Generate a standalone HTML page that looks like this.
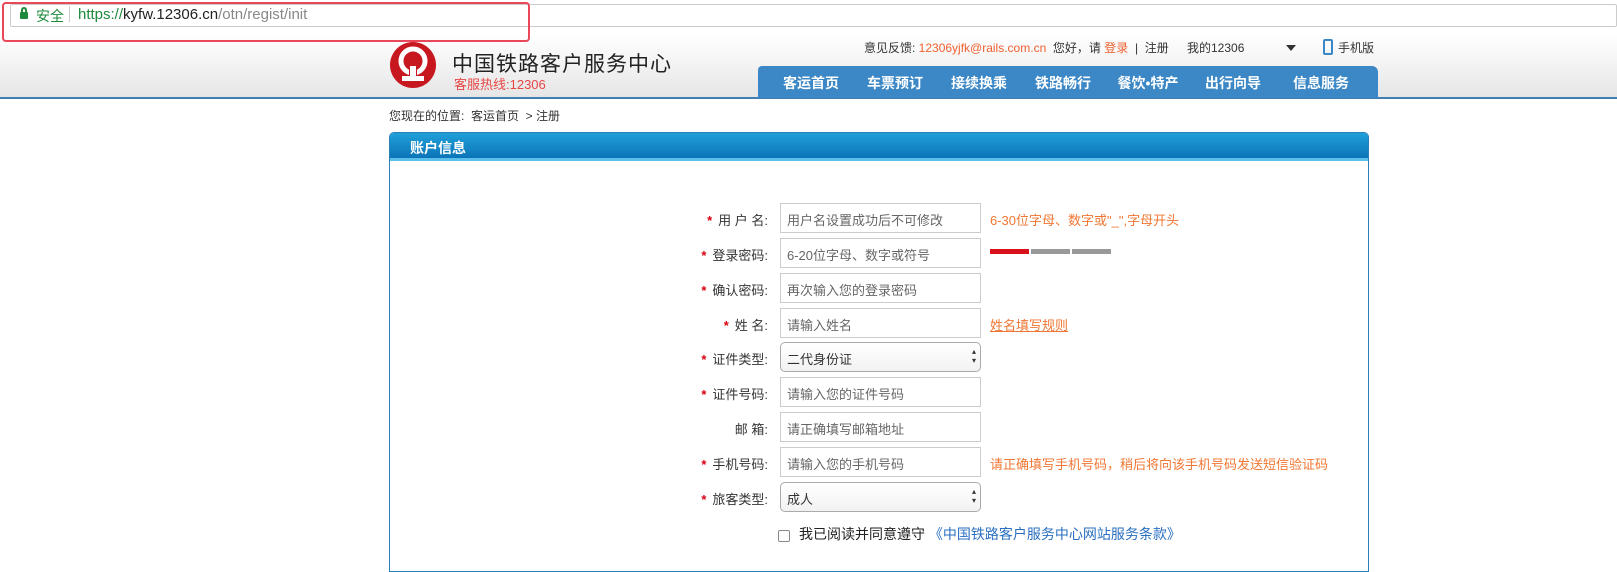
<!DOCTYPE html>
<html><head><meta charset="utf-8"><style>
*{margin:0;padding:0;box-sizing:border-box}
body{width:1617px;height:555px;overflow:hidden;background:#fff;font-family:"Liberation Sans","Noto Sans CJK SC",sans-serif;font-size:13px;color:#333;position:relative}
.abs{position:absolute;white-space:nowrap}
.hdr{position:absolute;left:0;top:34px;width:1617px;height:65px;background:linear-gradient(#fff,#e6e6e6);border-bottom:2px solid #3f7fb4}
.nav{position:absolute;left:758px;top:66px;width:620px;height:32px;background:#3c88c6;border-radius:4px 6px 0 0}
.nav span{position:absolute;top:7px;color:#fff;font-weight:bold;font-size:14px;transform:translateX(-50%)}
.panel{position:absolute;left:389px;top:132px;width:980px;height:440px;border:1px solid #2a7fb6;border-radius:5px 5px 0 0}
.ph{height:28px;background:linear-gradient(#20a0d8,#0b74b8);border-bottom:3px solid #5cc0ea;color:#fff;font-weight:bold;font-size:14px;padding:5px 0 0 20px;border-radius:4px 4px 0 0}
.inp{position:absolute;left:780px;width:201px;height:30px;border:1px solid #ccc;color:#666;font-size:13px;padding:6px 0 0 6px}
.sel{border-radius:5px;border-color:#aaa;background:linear-gradient(#fff,#f2f2f2);color:#333}
.sel:after{content:"▴\A▾";white-space:pre;position:absolute;right:4px;top:4px;font-size:8px;line-height:9px;color:#333}
.lb{position:absolute;right:849px;font-size:13px;color:#333}
.st{color:#d8000f;font-weight:bold;margin-right:6px}
.hint{position:absolute;left:990px;color:#f07733;font-size:13px}
</style></head><body>
<div class="abs" style="left:10px;top:4px;width:1607px;height:23px;border:1px solid #ccc;border-radius:2px"></div>
<div class="abs" style="left:20px;top:12px;width:8px;height:7px;background:#1d8b3b;border-radius:1px"></div>
<div class="abs" style="left:21px;top:7px;width:6px;height:7px;border:2px solid #1d8b3b;border-radius:3px 3px 0 0;border-bottom:none"></div>
<div class="abs" style="left:36px;top:6px;color:#1d8b3b;font-size:14px">安全</div>
<div class="abs" style="left:69px;top:6px;width:1px;height:16px;background:#ccc"></div>
<div class="abs" style="left:78px;top:6px;font-size:15px;color:#1d8b3b">https://<span style="color:#222">kyfw.12306.cn</span><span style="color:#888">/otn/regist/init</span></div>

<div class="hdr"></div>
<div class="abs" style="left:2px;top:2px;width:528px;height:40px;border:2px solid #e8485a;border-radius:4px;z-index:5"></div>
<svg class="abs" style="left:389px;top:41px" width="48" height="48" viewBox="0 0 48 48"><circle cx="24" cy="24" r="23" fill="#c8181f"/><circle cx="24" cy="20" r="12" fill="none" stroke="#fff" stroke-width="5"/><rect x="20" y="28" width="8" height="8" fill="#c8181f"/><rect x="21" y="25" width="6" height="11" fill="#fff"/><rect x="13" y="35" width="22" height="5" fill="#fff"/></svg>
<div class="abs" style="left:452px;top:48px;font-size:21px;color:#222;letter-spacing:1px">中国铁路客户服务中心</div>
<div class="abs" style="left:454px;top:74px;font-size:13px;color:#e84545">客服热线:12306</div>
<div class="abs" style="left:864px;top:39px;font-size:12px;color:#333">意见反馈: <span style="color:#f06030">12306yjfk@rails.com.cn</span>&nbsp;&nbsp;您好，请 <span style="color:#f06030">登录</span>&nbsp;&nbsp;|&nbsp;&nbsp;注册</div>
<div class="abs" style="left:1187px;top:39px;font-size:12px">我的12306</div>
<div class="abs" style="left:1286px;top:45px;border:5px solid transparent;border-top:6px solid #333"></div>
<div class="abs" style="left:1323px;top:39px;width:10px;height:16px;border:2px solid #3c88c6;border-radius:2px"></div>
<div class="abs" style="left:1338px;top:39px;font-size:12px">手机版</div>
<div class="nav"><span style="left:53px">客运首页</span><span style="left:137px">车票预订</span><span style="left:221px">接续换乘</span><span style="left:305px">铁路畅行</span><span style="left:390px">餐饮•特产</span><span style="left:475px">出行向导</span><span style="left:563px">信息服务</span></div>

<div class="abs" style="left:389px;top:107px;font-size:12px">您现在的位置:&nbsp; 客运首页 &nbsp;&gt; 注册</div>
<div class="panel"><div class="ph">账户信息</div></div>

<div class="lb" style="top:210px"><span class="st">*</span>用 户 名:</div><div class="inp" style="top:203px">用户名设置成功后不可修改</div><div class="hint" style="top:210px">6-30位字母、数字或"_",字母开头</div>
<div class="lb" style="top:245px"><span class="st">*</span>登录密码:</div><div class="inp" style="top:238px">6-20位字母、数字或符号</div>
<div class="abs" style="left:990px;top:249px;width:39px;height:5px;background:#d8111c"></div><div class="abs" style="left:1031px;top:249px;width:39px;height:5px;background:#999"></div><div class="abs" style="left:1072px;top:249px;width:39px;height:5px;background:#999"></div>
<div class="lb" style="top:280px"><span class="st">*</span>确认密码:</div><div class="inp" style="top:273px">再次输入您的登录密码</div>
<div class="lb" style="top:315px"><span class="st">*</span>姓 名:</div><div class="inp" style="top:308px">请输入姓名</div><div class="hint" style="top:315px;text-decoration:underline">姓名填写规则</div>
<div class="lb" style="top:349px"><span class="st">*</span>证件类型:</div><div class="inp sel" style="top:342px">二代身份证</div>
<div class="lb" style="top:384px"><span class="st">*</span>证件号码:</div><div class="inp" style="top:377px">请输入您的证件号码</div>
<div class="lb" style="top:419px">邮 箱:</div><div class="inp" style="top:412px">请正确填写邮箱地址</div>
<div class="lb" style="top:454px"><span class="st">*</span>手机号码:</div><div class="inp" style="top:447px">请输入您的手机号码</div><div class="hint" style="top:454px">请正确填写手机号码，稍后将向该手机号码发送短信验证码</div>
<div class="lb" style="top:489px"><span class="st">*</span>旅客类型:</div><div class="inp sel" style="top:482px">成人</div>
<div class="abs" style="left:778px;top:530px;width:12px;height:12px;border:1px solid #888;border-radius:2px"></div>
<div class="abs" style="left:799px;top:524px;font-size:14px;color:#222">我已阅读并同意遵守 <span style="color:#2a6fc0">《中国铁路客户服务中心网站服务条款》</span></div>
</body></html>
